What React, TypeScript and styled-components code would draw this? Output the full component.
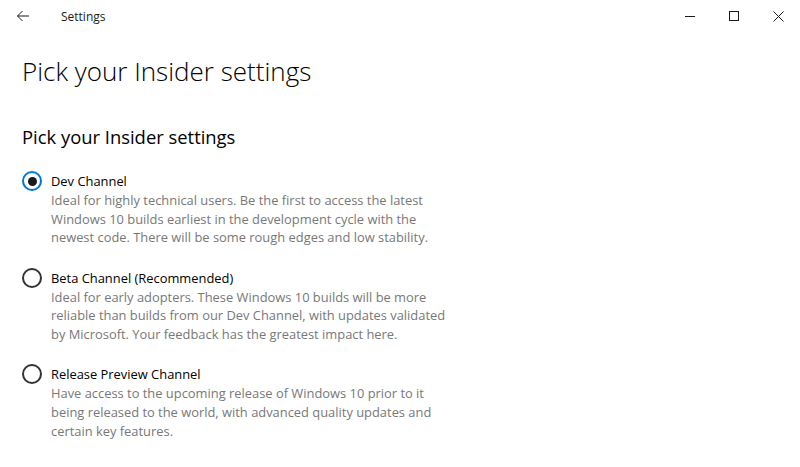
import styled, { createGlobalStyle } from "styled-components";

const GlobalStyle = createGlobalStyle`
    html, body {
        margin: 0;
        padding: 0;
        background: #ffffff;
    }
    body {
        font-family: "Open Sans", "Noto Sans", sans-serif;
        color: #000000;
    }
`;

const Window = styled.div`
    width: 800px;
    height: 467px;
    display: flex;
    flex-direction: column;
    overflow: hidden;
    background: #ffffff;
`;

const TitleBar = styled.div`
    height: 32px;
    display: flex;
    align-items: center;
`;

const BackButton = styled.div`
    width: 46px;
    height: 32px;
    display: flex;
    align-items: center;
    justify-content: center;
    color: #1a1a1a;
`;

const AppName = styled.span`
    font-size: 12px;
    color: #1a1a1a;
    margin-left: 15px;
    flex: 1;
`;

const Controls = styled.div`
    display: flex;
`;

const ControlButton = styled.div`
    width: 44px;
    height: 32px;
    display: flex;
    align-items: center;
    justify-content: center;
    color: #1a1a1a;
`;

const Content = styled.div`
    padding: 20px 22px 0 22px;
    display: flex;
    flex-direction: column;
`;

const PageTitle = styled.h1`
    margin: 0;
    font-size: 26px;
    font-weight: 300;
    line-height: 38px;
    white-space: nowrap;
`;

const SectionTitle = styled.h2`
    margin: 33px 0 0 0;
    font-size: 18.4px;
    font-weight: 400;
    line-height: 28px;
    white-space: nowrap;
`;

const OptionList = styled.div`
    display: flex;
    flex-direction: column;
    gap: 20.5px;
    margin-top: 20px;
`;

const Option = styled.div`
    display: flex;
    gap: 9px;
`;

const Radio = styled.div<{ $checked?: boolean }>`
    width: 20px;
    height: 20px;
    box-sizing: border-box;
    border-radius: 50%;
    border: 2px solid ${p => (p.$checked ? "#0078d7" : "#333333")};
    display: flex;
    align-items: center;
    justify-content: center;
    flex-shrink: 0;
    &::after {
        content: "";
        width: 9px;
        height: 9px;
        border-radius: 50%;
        background: ${p => (p.$checked ? "#1a1a1a" : "transparent")};
    }
`;

const OptionText = styled.div`
    display: flex;
    flex-direction: column;
`;

const Label = styled.div`
    font-size: 12.9px;
    line-height: 20px;
    color: #000000;
    white-space: nowrap;
`;

const Description = styled.div`
    font-size: 12.9px;
    line-height: 18.7px;
    color: #787878;
    white-space: nowrap;
`;

const options = [
    {
        label: "Dev Channel",
        desc: [
            "Ideal for highly technical users. Be the first to access the latest",
            "Windows 10 builds earliest in the development cycle with the",
            "newest code. There will be some rough edges and low stability.",
        ],
        checked: true,
    },
    {
        label: "Beta Channel (Recommended)",
        desc: [
            "Ideal for early adopters. These Windows 10 builds will be more",
            "reliable than builds from our Dev Channel, with updates validated",
            "by Microsoft. Your feedback has the greatest impact here.",
        ],
        checked: false,
    },
    {
        label: "Release Preview Channel",
        desc: [
            "Have access to the upcoming release of Windows 10 prior to it",
            "being released to the world, with advanced quality updates and",
            "certain key features.",
        ],
        checked: false,
    },
];

function App() {
    return (
        <>
            <GlobalStyle />
            <Window>
                <TitleBar>
                    <BackButton>
                        <svg width="14" height="12" viewBox="0 0 14 12" fill="none" stroke="currentColor" strokeWidth="1">
                            <path d="M13 6H1.5M6.5 1L1.5 6l5 5" />
                        </svg>
                    </BackButton>
                    <AppName>Settings</AppName>
                    <Controls>
                        <ControlButton>
                            <svg width="10" height="10" viewBox="0 0 10 10" stroke="currentColor" strokeWidth="1">
                                <path d="M0 5.5h10" />
                            </svg>
                        </ControlButton>
                        <ControlButton>
                            <svg width="10" height="10" viewBox="0 0 10 10" fill="none" stroke="currentColor" strokeWidth="1">
                                <rect x="0.5" y="0.5" width="9" height="9" />
                            </svg>
                        </ControlButton>
                        <ControlButton>
                            <svg width="11" height="11" viewBox="0 0 11 11" stroke="currentColor" strokeWidth="1">
                                <path d="M0.5 0.5l10 10M10.5 0.5l-10 10" />
                            </svg>
                        </ControlButton>
                    </Controls>
                </TitleBar>
                <Content>
                    <PageTitle>Pick your Insider settings</PageTitle>
                    <SectionTitle>Pick your Insider settings</SectionTitle>
                    <OptionList>
                        {options.map((o, i) => (
                            <Option key={i}>
                                <Radio $checked={o.checked} />
                                <OptionText>
                                    <Label>{o.label}</Label>
                                    <Description>
                                        {o.desc.map((line, j) => (
                                            <div key={j}>{line}</div>
                                        ))}
                                    </Description>
                                </OptionText>
                            </Option>
                        ))}
                    </OptionList>
                </Content>
            </Window>
        </>
    );
}

export default App;
